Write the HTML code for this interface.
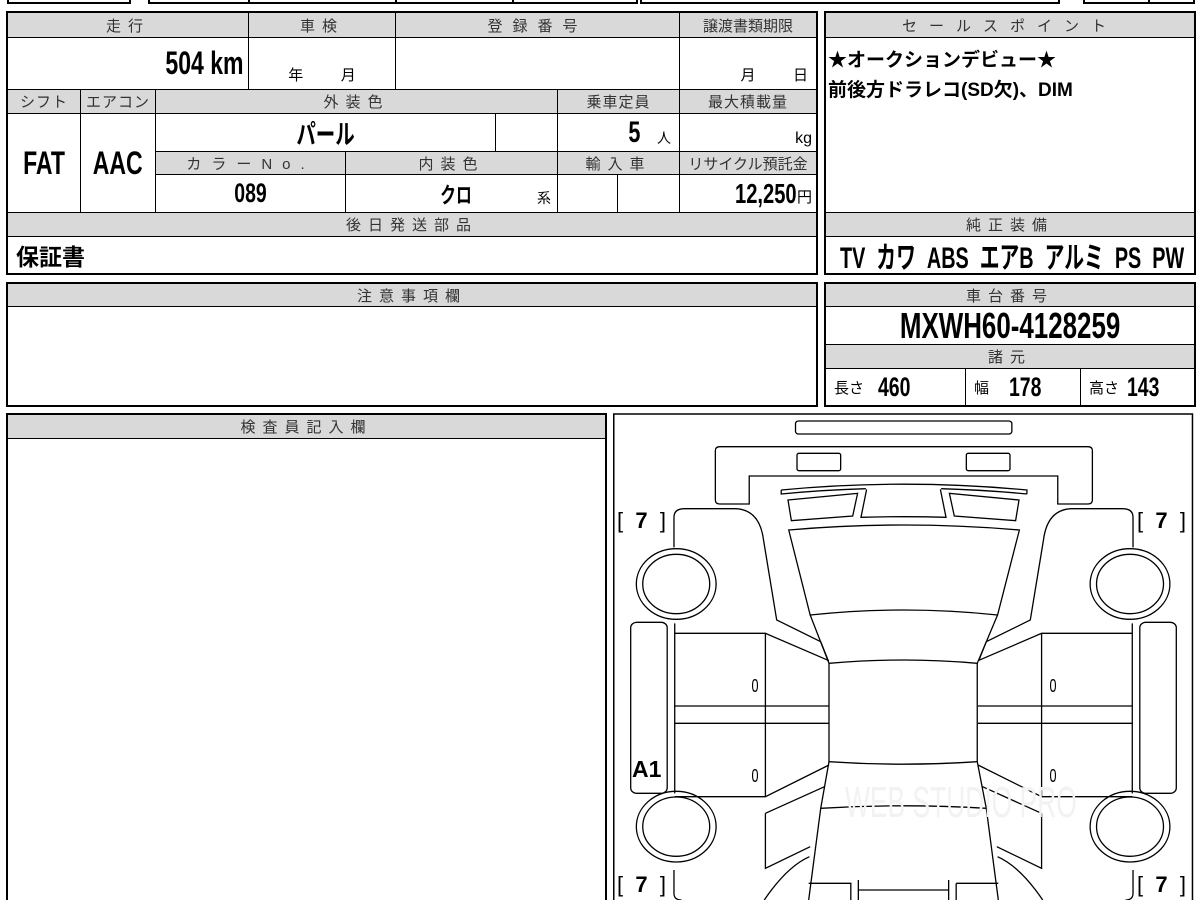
<!DOCTYPE html>
<html style="overflow:hidden;height:900px"><head><meta charset="utf-8"><style>
body{margin:0;width:1200px;height:900px;overflow:hidden;background:#fff;position:relative;font-family:"Liberation Sans","Noto Sans CJK JP",sans-serif;color:#000}
.c{position:absolute;border:1px solid #000;box-sizing:border-box;display:flex;align-items:center;justify-content:center;overflow:hidden;white-space:nowrap}
.h{background:#d9d9d9;font-size:15px;letter-spacing:7px;color:#333}
.o{position:absolute;border:2px solid #000;box-sizing:border-box;pointer-events:none}
.b{font-weight:bold;display:inline-block;transform:scaleX(.72)}
.r{transform-origin:right center}
.l{transform-origin:left center}
.t{position:absolute;white-space:nowrap}
</style></head><body>
<div class="o" style="left:7px;top:-10px;width:124px;height:14px"></div>
<div class="o" style="left:148px;top:-10px;width:490px;height:14px"></div>
<div class="t" style="left:248px;top:-10px;width:2px;height:13px;background:#000"></div>
<div class="t" style="left:395px;top:-10px;width:2px;height:13px;background:#000"></div>
<div class="t" style="left:512px;top:-10px;width:2px;height:13px;background:#000"></div>
<div class="o" style="left:640px;top:-10px;width:420px;height:14px"></div>
<div class="o" style="left:1083px;top:-10px;width:112px;height:14px"></div>
<div class="t" style="left:1148px;top:-10px;width:2px;height:13px;background:#000"></div>

<div class="c h" style="left:7px;top:12px;width:242px;height:26px">走行</div>
<div class="c h" style="left:248px;top:12px;width:148px;height:26px">車検</div>
<div class="c h" style="left:395px;top:12px;width:285px;height:26px;letter-spacing:10px">登録番号</div>
<div class="c h" style="left:679px;top:12px;width:138px;height:26px;letter-spacing:0">譲渡書類期限</div>
<div class="c" style="left:7px;top:37px;width:242px;height:53px;justify-content:flex-end;padding-right:4px"><span class="b r" style="font-size:32px">504 km</span></div>
<div class="c" style="left:248px;top:37px;width:148px;height:53px;align-items:flex-end;font-size:15px;padding-bottom:4px">年&nbsp;&nbsp;&nbsp;&nbsp;&nbsp;&nbsp;&nbsp;&nbsp;&nbsp;月</div>
<div class="c" style="left:395px;top:37px;width:285px;height:53px"></div>
<div class="c" style="left:679px;top:37px;width:138px;height:53px;align-items:flex-end;font-size:15px;padding-bottom:4px;justify-content:flex-end;padding-right:8px">月&nbsp;&nbsp;&nbsp;&nbsp;&nbsp;&nbsp;&nbsp;&nbsp;&nbsp;日</div>

<div class="c h" style="left:7px;top:89px;width:74px;height:25px;letter-spacing:1px">シフト</div>
<div class="c h" style="left:80px;top:89px;width:76px;height:25px;letter-spacing:1px">エアコン</div>
<div class="c h" style="left:155px;top:89px;width:403px;height:25px">外装色</div>
<div class="c h" style="left:557px;top:89px;width:123px;height:25px;letter-spacing:1px">乗車定員</div>
<div class="c h" style="left:679px;top:89px;width:138px;height:25px;letter-spacing:1px">最大積載量</div>

<div class="c" style="left:7px;top:113px;width:74px;height:100px"><span class="b" style="font-size:32px">FAT</span></div>
<div class="c" style="left:80px;top:113px;width:76px;height:100px"><span class="b" style="font-size:32px">AAC</span></div>
<div class="c" style="left:155px;top:113px;width:341px;height:39px"><span class="b" style="font-size:27px">パール</span></div>
<div class="c" style="left:495px;top:113px;width:63px;height:39px"></div>
<div class="c" style="left:557px;top:113px;width:123px;height:39px;justify-content:flex-end;padding-right:8px"><span class="b" style="font-size:30px">5</span><span style="font-size:14px;margin-left:14px;margin-top:10px">人</span></div>
<div class="c" style="left:679px;top:113px;width:138px;height:39px;justify-content:flex-end;padding-right:4px;align-items:flex-end;font-size:16px;padding-bottom:3px">kg</div>

<div class="c h" style="left:155px;top:151px;width:191px;height:24px;letter-spacing:10px">カラーNo.</div>
<div class="c h" style="left:345px;top:151px;width:213px;height:24px">内装色</div>
<div class="c h" style="left:557px;top:151px;width:123px;height:24px">輸入車</div>
<div class="c h" style="left:679px;top:151px;width:138px;height:24px;letter-spacing:0">リサイクル預託金</div>
<div class="c" style="left:155px;top:174px;width:191px;height:39px"><span class="b" style="font-size:27px">089</span></div>
<div class="c" style="left:345px;top:174px;width:213px;height:39px"><span class="b" style="font-size:22px;margin-left:10px">クロ</span><span style="position:absolute;right:6px;bottom:4px;font-size:14px">系</span></div>
<div class="c" style="left:557px;top:174px;width:61px;height:39px"></div>
<div class="c" style="left:617px;top:174px;width:63px;height:39px"></div>
<div class="c" style="left:679px;top:174px;width:138px;height:39px;justify-content:flex-end;padding-right:4px"><span class="b r" style="font-size:28px">12,250</span><span style="font-size:15px;margin-top:6px">円</span></div>

<div class="c h" style="left:7px;top:212px;width:810px;height:25px">後日発送部品</div>
<div class="c" style="left:7px;top:236px;width:810px;height:38px;justify-content:flex-start;padding-left:8px"><span style="font-size:23px;font-weight:bold">保証書</span></div>
<div class="o" style="left:6px;top:11px;width:812px;height:264px"></div>

<div class="c h" style="left:825px;top:12px;width:370px;height:26px;letter-spacing:12px">セールスポイント</div>
<div class="c" style="left:825px;top:37px;width:370px;height:176px;display:block;padding:8px 2px;font-size:19px;font-weight:bold;line-height:30px;white-space:normal">★オークションデビュー★<br>前後方ドラレコ(SD欠)、DIM</div>
<div class="c h" style="left:825px;top:212px;width:370px;height:25px">純正装備</div>
<div class="c" style="left:825px;top:236px;width:370px;height:38px;justify-content:flex-start;padding-left:14px"><span class="b l" style="font-size:30px;transform:scaleX(.66)">TV&nbsp;&nbsp;カワ&nbsp;&nbsp;ABS&nbsp;&nbsp;エアB&nbsp;&nbsp;アルミ&nbsp;&nbsp;PS&nbsp;&nbsp;PW</span></div>
<div class="o" style="left:824px;top:11px;width:372px;height:264px"></div>

<div class="c h" style="left:7px;top:283px;width:810px;height:24px">注意事項欄</div>
<div class="c" style="left:7px;top:306px;width:810px;height:100px"></div>
<div class="o" style="left:6px;top:282px;width:812px;height:125px"></div>

<div class="c h" style="left:825px;top:283px;width:370px;height:24px">車台番号</div>
<div class="c" style="left:825px;top:306px;width:370px;height:39px"><span class="b" style="font-size:36px">MXWH60-4128259</span></div>
<div class="c h" style="left:825px;top:344px;width:370px;height:25px">諸元</div>
<div class="c" style="left:825px;top:368px;width:141px;height:38px;justify-content:flex-start;padding-left:8px"><span style="font-size:15px">長さ</span><span class="b l" style="font-size:27px;margin-left:14px">460</span></div>
<div class="c" style="left:965px;top:368px;width:116px;height:38px;justify-content:flex-start;padding-left:8px"><span style="font-size:15px">幅</span><span class="b l" style="font-size:27px;margin-left:20px">178</span></div>
<div class="c" style="left:1080px;top:368px;width:115px;height:38px;justify-content:flex-start;padding-left:8px"><span style="font-size:15px">高さ</span><span class="b l" style="font-size:27px;margin-left:8px">143</span></div>
<div class="o" style="left:824px;top:282px;width:372px;height:125px"></div>

<div class="c h" style="left:7px;top:414px;width:599px;height:25px">検査員記入欄</div>
<div class="c" style="left:7px;top:438px;width:599px;height:462px;border-bottom:none"></div>
<div class="o" style="left:6px;top:413px;width:601px;height:487px;border-bottom:none"></div>

<svg style="position:absolute;left:610px;top:410px" width="590" height="490" viewBox="0 0 1568 1470" preserveAspectRatio="none" fill="none" stroke="#000">
<g stroke-width="1.3">
<path vector-effect="non-scaling-stroke" stroke-width="1.5" d="M10,1470 L10,12 L1548,12 L1548,1470"/>
<rect x="493" y="33" width="575" height="39" rx="8" vector-effect="non-scaling-stroke"/>
<path vector-effect="non-scaling-stroke" d="M280,270 L280,122 Q280,110 292,110 L1270,110 Q1282,110 1282,122 L1282,270 Q1282,282 1270,282 L1190,282 L1190,198 L370,198 L370,282 L292,282 Q280,282 280,270 Z"/>
<rect x="497" y="130" width="116" height="52" rx="5" vector-effect="non-scaling-stroke"/>
<rect x="947" y="130" width="116" height="52" rx="5" vector-effect="non-scaling-stroke"/>
<path vector-effect="non-scaling-stroke" d="M455,240 Q780,205 1108,240 L1108,252 M455,240 L455,252 Q560,240 680,236 M880,236 Q1000,240 1108,252"/>
<path vector-effect="non-scaling-stroke" d="M473,270 L658,250 L645,318 L482,332 Z M1087,270 L902,250 L915,318 L1078,332 Z"/>
<path vector-effect="non-scaling-stroke" d="M682,238 L667,322 Q780,318 893,322 L878,238"/>
<path vector-effect="non-scaling-stroke" d="M475,360 Q780,330 1088,360 L1030,615 Q780,585 532,615 Z"/>
<path vector-effect="non-scaling-stroke" d="M532,615 L582,760 Q780,740 976,760 L1030,615"/>
<path vector-effect="non-scaling-stroke" d="M582,760 L582,1055 Q780,1070 976,1055 L976,760"/>
<path vector-effect="non-scaling-stroke" d="M582,1055 L560,1195 Q780,1180 1000,1195 L976,1055 M560,1195 L528,1470 M1000,1195 L1032,1470"/>
<path vector-effect="non-scaling-stroke" d="M528,1420 L640,1420 L640,1470 M660,1410 L660,1470 M660,1440 L900,1440 M900,1410 L900,1470 M920,1420 L1032,1420 M920,1420 L920,1470"/>
<path vector-effect="non-scaling-stroke" d="M170,412 L170,322 Q170,296 198,296 L335,296 Q398,300 408,390 L443,630 L560,695 L580,752"/>
<path vector-effect="non-scaling-stroke" d="M1390,412 L1390,322 Q1390,296 1362,296 L1225,296 Q1162,300 1152,390 L1117,630 L1000,695 L980,752"/>
<path vector-effect="non-scaling-stroke" d="M172,640 L172,1150 M172,670 L413,670 L582,752 M413,670 L413,1160 M172,888 L582,888 M172,940 L582,940 M172,1160 L413,1160 L582,1065"/>
<path vector-effect="non-scaling-stroke" d="M1388,640 L1388,1150 M1388,670 L1147,670 L978,752 M1147,670 L1147,1160 M1388,888 L978,888 M1388,940 L978,940 M1388,1160 L1147,1160 L978,1065"/>
<path vector-effect="non-scaling-stroke" d="M413,1210 L570,1130 M413,1210 L413,1375 L532,1310 M170,1380 L170,1450 Q170,1470 190,1470 M410,1470 Q470,1370 530,1340"/>
<path vector-effect="non-scaling-stroke" d="M1147,1210 L990,1130 M1147,1210 L1147,1375 L1028,1310 M1390,1380 L1390,1450 Q1390,1470 1370,1470 M1150,1470 Q1090,1370 1030,1340"/>
<rect x="55" y="637" width="97" height="513" rx="16" vector-effect="non-scaling-stroke"/>
<rect x="1408" y="637" width="97" height="513" rx="16" vector-effect="non-scaling-stroke"/>
<circle cx="176" cy="522" r="106" vector-effect="non-scaling-stroke"/><circle cx="176" cy="522" r="89" vector-effect="non-scaling-stroke"/>
<circle cx="176" cy="1250" r="106" vector-effect="non-scaling-stroke"/><circle cx="176" cy="1250" r="89" vector-effect="non-scaling-stroke"/>
<circle cx="1382" cy="522" r="106" vector-effect="non-scaling-stroke"/><circle cx="1382" cy="522" r="89" vector-effect="non-scaling-stroke"/>
<circle cx="1382" cy="1250" r="106" vector-effect="non-scaling-stroke"/><circle cx="1382" cy="1250" r="89" vector-effect="non-scaling-stroke"/>
</g></svg>
<div class="t" style="left:617px;top:508px;font-size:22px">[&nbsp;&nbsp;<b>7</b>&nbsp;&nbsp;]</div>
<div class="t" style="left:1137px;top:508px;font-size:22px">[&nbsp;&nbsp;<b>7</b>&nbsp;&nbsp;]</div>
<div class="t" style="left:617px;top:872px;font-size:22px">[&nbsp;&nbsp;<b>7</b>&nbsp;&nbsp;]</div>
<div class="t" style="left:1137px;top:872px;font-size:22px">[&nbsp;&nbsp;<b>7</b>&nbsp;&nbsp;]</div>
<div class="t" style="left:632px;top:756px;font-size:23px;font-weight:bold">A1</div>
<div class="t" style="left:750px;top:676px;font-size:18px;transform:scaleX(.7)">0</div>
<div class="t" style="left:1048px;top:676px;font-size:18px;transform:scaleX(.7)">0</div>
<div class="t" style="left:750px;top:766px;font-size:18px;transform:scaleX(.7)">0</div>
<div class="t" style="left:1048px;top:766px;font-size:18px;transform:scaleX(.7)">0</div>
<div class="t" style="left:845px;top:778px;font-size:44px;color:#f2f2f2;transform:scaleX(.6);transform-origin:left">WEB STUDIO PRO</div>
</body></html>
